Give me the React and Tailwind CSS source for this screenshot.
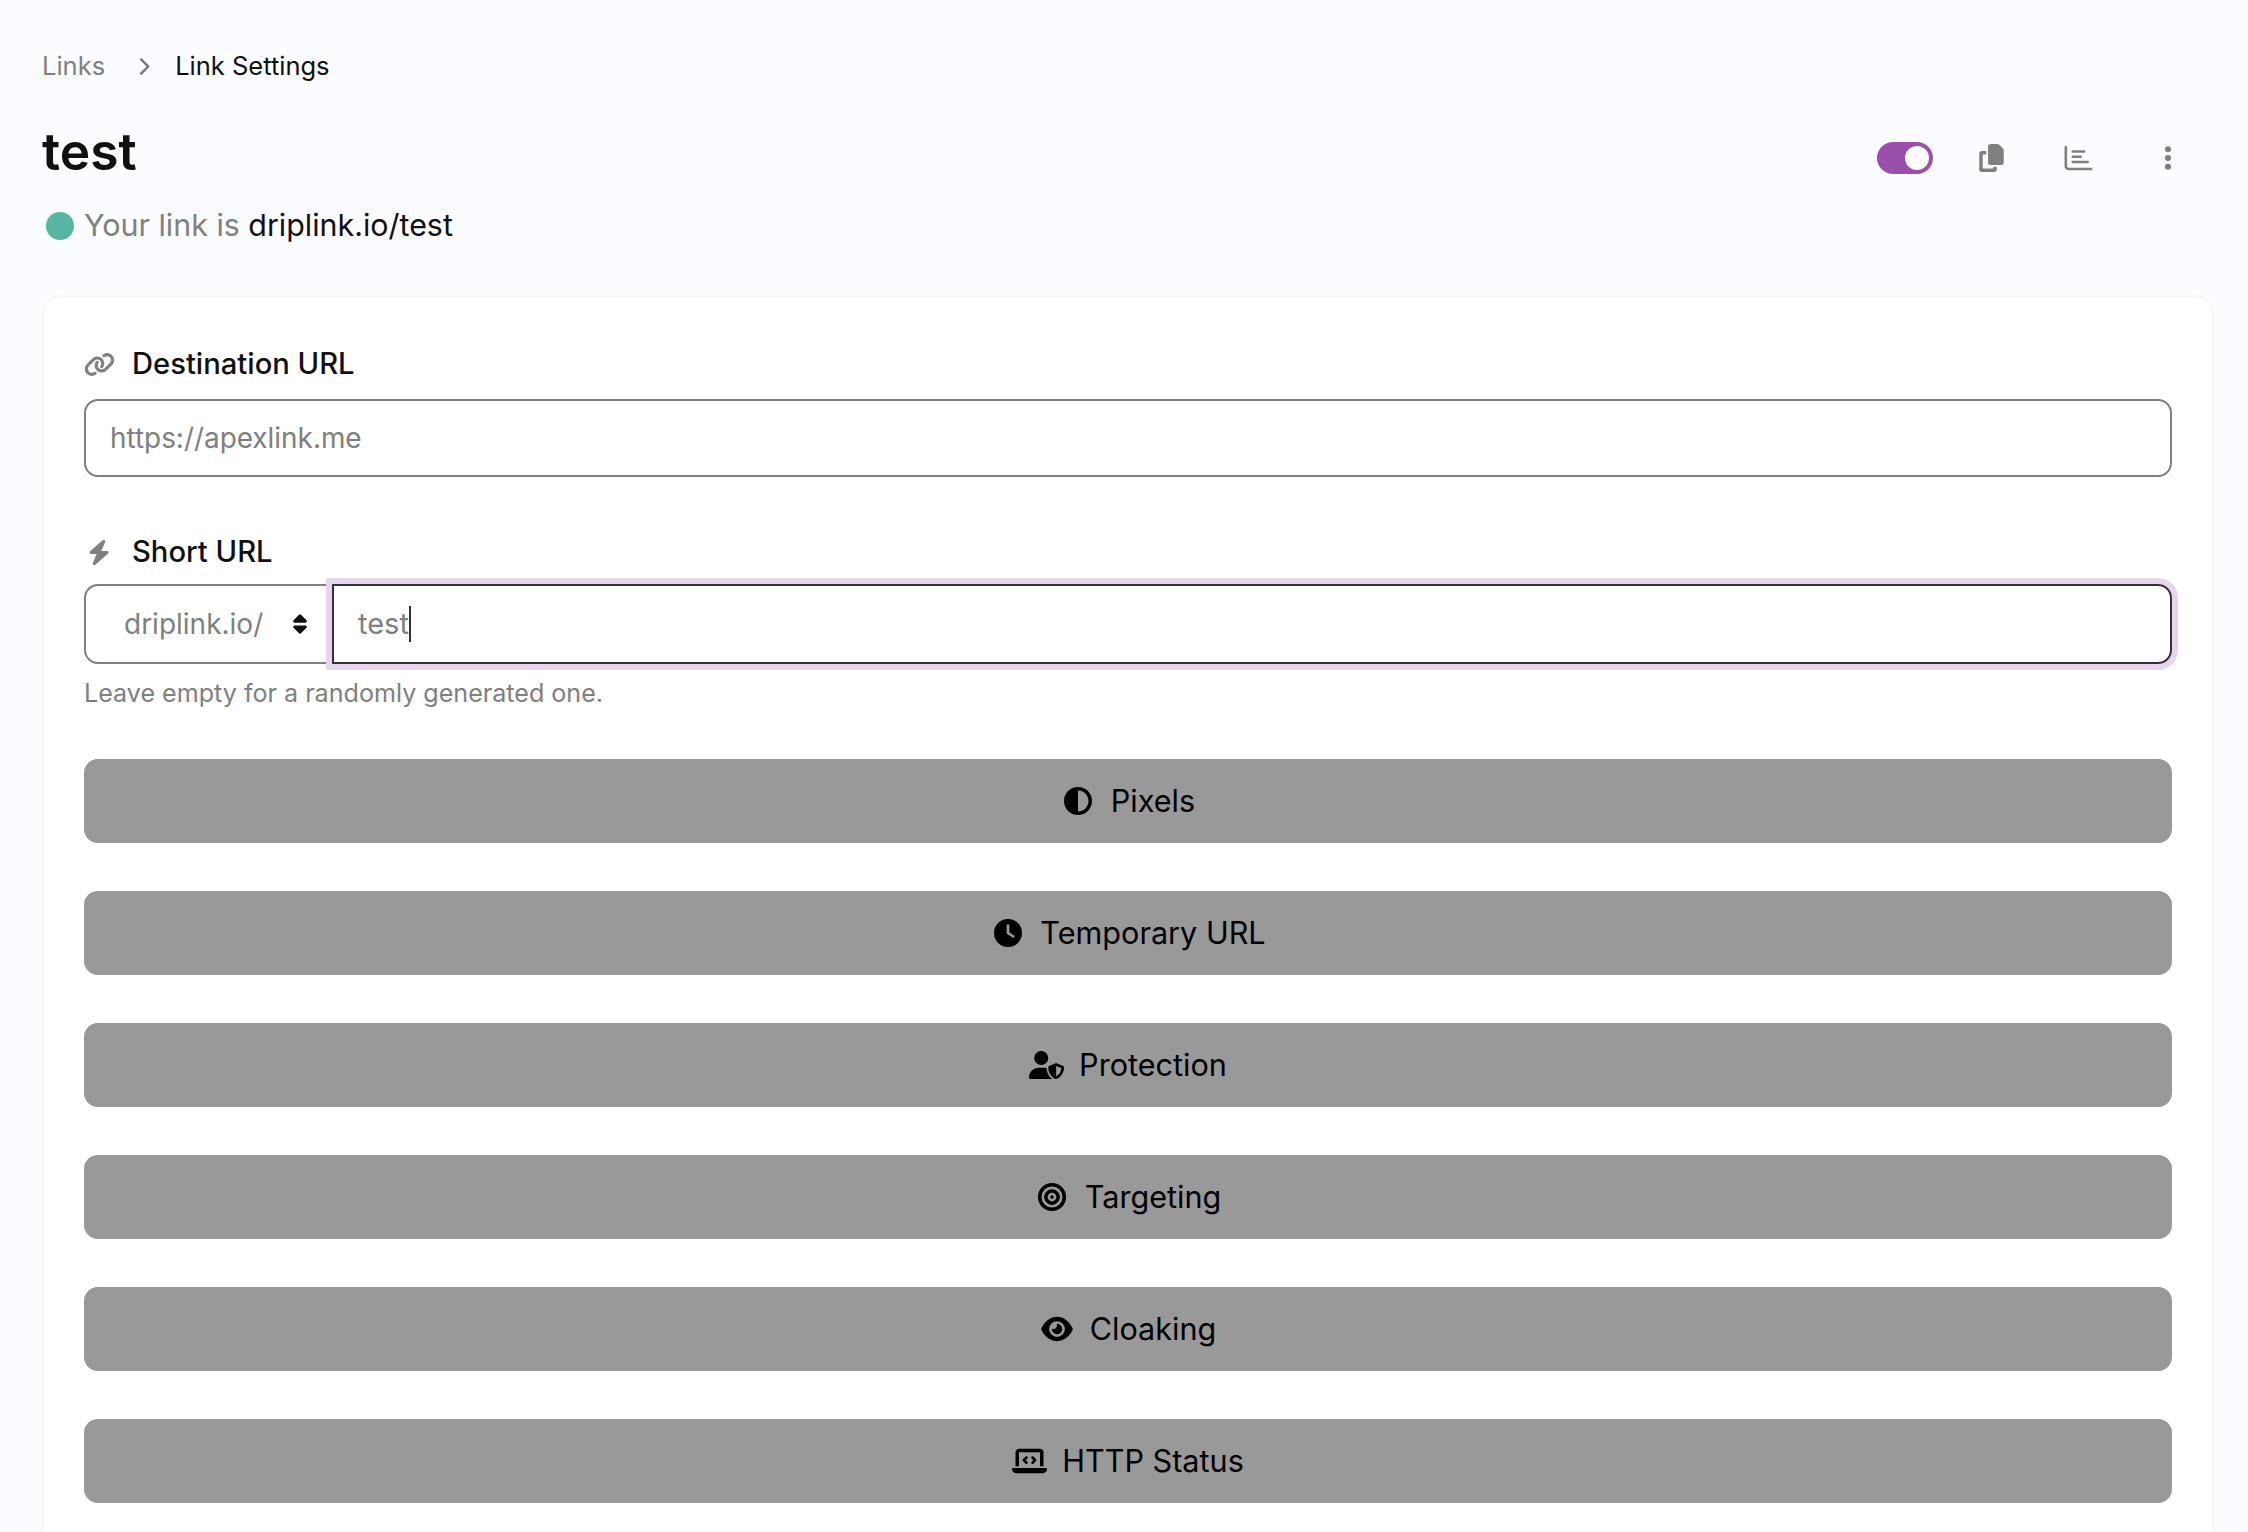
import React from 'react'
import {
  FaBolt,
  FaBullseye,
  FaChevronRight,
  FaCircleHalfStroke,
  FaClock,
  FaCopy,
  FaEllipsisVertical,
  FaEye,
  FaLaptopCode,
  FaLink,
  FaRegChartBar,
  FaSort,
  FaUserShield
} from 'react-icons/fa6'

const sections = [
  { name: 'Pixels', icon: FaCircleHalfStroke, size: 'w-[28px]' },
  { name: 'Temporary URL', icon: FaClock, size: 'w-[28px]' },
  { name: 'Protection', icon: FaUserShield, size: 'w-[35px]' },
  { name: 'Targeting', icon: FaBullseye, size: 'w-[28px]' },
  { name: 'Cloaking', icon: FaEye, size: 'w-[32px]' },
  { name: 'HTTP Status', icon: FaLaptopCode, size: 'w-[35px]' }
]

function App () {
  return (
    <div className="h-[1532px] overflow-hidden bg-[#fbfcff] pl-[42px] pr-[34px] pt-[48px] font-['Inter',sans-serif] text-[#111]">
      <nav className="flex h-[36px] items-center text-[25.5px]">
        <span className="text-[#808080]">Links</span>
        <FaChevronRight className="ml-[32px] mr-[25px] h-[19px] w-[13px] text-[#777]" />
        <span>Link Settings</span>
      </nav>

      <div className="mt-[37px] flex items-start justify-between">
        <div>
          <h1 className="text-[51.5px] font-semibold leading-[60px]">test</h1>
          <p className="mt-[24px] flex h-[42px] items-center text-[30.4px]">
            <span className="ml-[4px] mr-[10px] h-[28px] w-[28px] rounded-full bg-[#56b6a4]" />
            <span className="text-[#808080]">Your link is&nbsp;</span>
            <span>driplink.io/test</span>
          </p>
        </div>
        <div className="mt-[21px] flex items-center text-[#808080]">
          <button type="button" className="flex h-[32px] w-[56px] items-center justify-end rounded-full bg-[#9b4fad] pr-[4px]">
            <span className="h-[24px] w-[24px] rounded-full bg-white" />
          </button>
          <FaCopy className="ml-[46px] h-[28px] w-[25px]" />
          <FaRegChartBar className="ml-[60px] h-[28px] w-[29px]" />
          <FaEllipsisVertical className="ml-[68px] mr-[39px] h-[28px] w-[14px]" />
        </div>
      </div>

      <section className="mt-[48px] rounded-[20px] border-2 border-[#faf5fb] bg-white px-[40px] pb-[48px] pt-[49px]">
        <label className="flex h-[36px] items-center text-[29.2px] font-medium">
          <FaLink className="mr-[17px] h-[27px] w-[31px] text-[#808080]" />
          Destination URL
        </label>
        <input
          readOnly
          placeholder="https://apexlink.me"
          className="mt-[17px] block h-[78px] w-full rounded-[14px] border-2 border-[#808080] bg-white px-[24px] text-[27.9px] placeholder:text-[#808080] outline-none"
        />

        <label className="mt-[57px] flex h-[36px] items-center text-[29.2px] font-medium">
          <FaBolt className="mr-[22px] ml-[4px] h-[27px] w-[22px] text-[#808080]" />
          Short URL
        </label>
        <div className="mt-[14px] flex h-[80px]">
          <div className="flex w-[248px] items-center justify-between rounded-l-[14px] border-2 border-r-0 border-[#808080] pl-[38px] pr-[24px] text-[28px] text-[#808080]">
            <span>driplink.io/</span>
            <FaSort className="h-[22px] w-[16px] text-[#111]" />
          </div>
          <div className="flex flex-1 items-center rounded-r-[14px] border-2 border-[#333] px-[24px] text-[29px] text-[#808080] shadow-[0_0_0_6px_#e7d5ee]">
            <span>test</span>
            <span className="h-[36px] w-[2px] bg-[#333]" />
          </div>
        </div>
        <p className="mt-[11px] text-[25.1px] leading-[36px] text-[#808080]">Leave empty for a randomly generated one.</p>

        <div className="mt-[48px] flex flex-col gap-[48px]">
          {sections.map((s) => (
            <button key={s.name} type="button" className="flex h-[84px] items-center justify-center rounded-[14px] bg-[#999] text-[30.6px] text-black">
              <span className="mr-[15px] flex w-[35px] justify-center">
                <s.icon className={`h-[28px] shrink-0 ${s.size}`} />
              </span>
              {s.name}
            </button>
          ))}
        </div>
      </section>
    </div>
  )
}

export default App
